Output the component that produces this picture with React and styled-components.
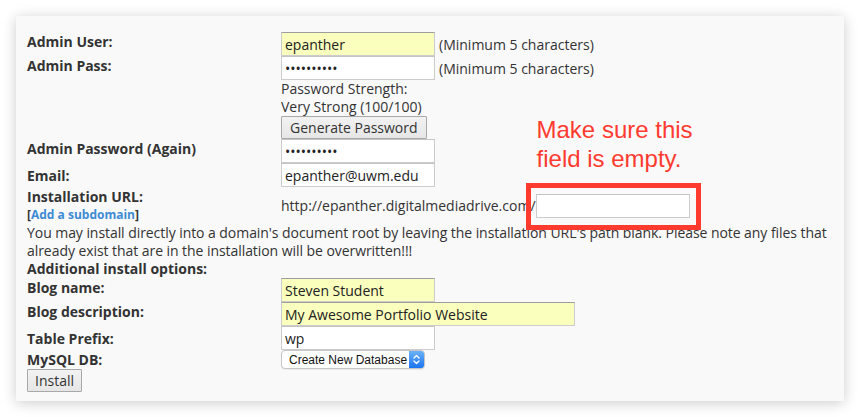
import React from "react";
import styled, { createGlobalStyle } from "styled-components";

const Global = createGlobalStyle`
  html, body { margin: 0; padding: 0; background: #ffffff; }
  body { font-family: "Open Sans", "Liberation Sans", sans-serif; }
`;

const Page = styled.div`
  padding: 16px;
  width: 861px;
  height: 417px;
  box-sizing: border-box;
`;

const Panel = styled.div`
  width: 828px;
  height: 385px;
  box-sizing: border-box;
  padding: 16px 11px 9px 11px;
  background: #f9f9f9;
  box-shadow: 0 2px 13px rgba(0, 0, 0, 0.2);
`;

const Form = styled.div`
  display: grid;
  grid-template-columns: 254px 1fr;
  color: #333333;
  font-family: "Open Sans", "Liberation Sans", sans-serif;
  font-size: 14px;
`;

const Label = styled.div`
  font-weight: 700;
  line-height: 19px;
  align-self: start;
  padding-top: ${(p) => p.$offset || 0}px;
`;

const LabelBlock = styled.div`
  align-self: start;
  display: flex;
  flex-direction: column;
`;

const SubLink = styled.div`
  font-size: 12px;
  font-weight: 700;
  line-height: 18px;
  a {
    color: #3d8bd4;
    text-decoration: none;
  }
`;

const Value = styled.div`
  display: flex;
  align-items: center;
  gap: ${(p) => (p.$gap === undefined ? 4 : p.$gap)}px;
  align-self: ${(p) => (p.$center ? "center" : "start")};
  line-height: 19px;
  white-space: nowrap;
`;

const UrlText = styled.span`
  letter-spacing: 0;
`;

const Stack = styled.div`
  display: flex;
  flex-direction: column;
  align-items: flex-start;
  line-height: 18px;
`;

const InputRow = styled.div`
  display: flex;
  align-items: center;
  gap: 4px;
  line-height: 19px;
`;

const TextInput = styled.input`
  box-sizing: border-box;
  width: ${(p) => p.$w || 154}px;
  height: 24px;
  margin: 0;
  padding: 0 3px;
  border: 1px solid #cccccc;
  border-top-color: ${(p) => (p.$filled ? "#9e9e9e" : "#c4c4c4")};
  background: ${(p) => (p.$filled ? "#faffbd" : "#ffffff")};
  color: #222222;
  font-family: "Open Sans", "Liberation Sans", sans-serif;
  font-size: 14px;
  outline: none;
`;

const Button = styled.button`
  box-sizing: border-box;
  height: 23px;
  margin: 0;
  padding: 0 ${(p) => p.$pad || 8}px;
  border: 1px solid #a8a8a8;
  border-radius: 1px;
  background: linear-gradient(#f2f2f2, #e6e6e6);
  color: #333333;
  font-family: "Open Sans", "Liberation Sans", sans-serif;
  font-size: 14px;
  line-height: 21px;
  cursor: pointer;
`;

const Note = styled.div`
  grid-column: 1 / -1;
  line-height: 18px;
  letter-spacing: -0.06px;
  margin-right: -4px;
`;

const Wide = styled.div`
  grid-column: 1 / -1;
  font-weight: 700;
  line-height: 18px;
`;

const Highlight = styled.span`
  position: relative;
  display: inline-flex;
  &::after {
    content: "";
    position: absolute;
    left: -10px;
    top: -11px;
    right: -11px;
    bottom: -12px;
    border: 5px solid #ff3b30;
    pointer-events: none;
  }
`;

const Callout = styled.div`
  position: absolute;
  left: 1px;
  top: -79px;
  font-family: "Liberation Sans", Arial, sans-serif;
  font-size: 24px;
  line-height: 29px;
  color: #ff3b30;
  white-space: nowrap;
`;

const SelectBox = styled.div`
  display: inline-flex;
  box-sizing: border-box;
  width: 144px;
  height: 19px;
  border: 1px solid #c6c6c6;
  border-radius: 4px;
  background: #ffffff;
  overflow: hidden;
  box-shadow: 0 1px 1px rgba(0, 0, 0, 0.06);
`;

const NativeSelect = styled.select`
  appearance: none;
  -webkit-appearance: none;
  flex: 1;
  min-width: 0;
  height: 100%;
  margin: 0;
  border: 0;
  padding: 0 0 0 7px;
  background: transparent;
  color: #111111;
  font-family: "Liberation Sans", Arial, sans-serif;
  font-size: 12px;
  outline: none;
`;

const Stepper = styled.span`
  width: 15px;
  height: 100%;
  display: flex;
  align-items: center;
  justify-content: center;
  background: linear-gradient(#6ab2fb, #1c74f0);
`;

const Chevrons = () => (
  <svg width="7" height="11" viewBox="0 0 7 11" fill="none">
    <path d="M1 4 L3.5 1.5 L6 4" stroke="#fff" strokeWidth="1.3" strokeLinecap="round" strokeLinejoin="round" />
    <path d="M1 7 L3.5 9.5 L6 7" stroke="#fff" strokeWidth="1.3" strokeLinecap="round" strokeLinejoin="round" />
  </svg>
);

export default function App() {
  return (
    <>
      <Global />
      <Page>
        <Panel>
          <Form>
            <Label>Admin User:</Label>
            <Value>
              <TextInput $filled defaultValue="epanther" />
              <span>(Minimum 5 characters)</span>
            </Value>

            <Label>Admin Pass:</Label>
            <Stack>
              <InputRow>
                <TextInput type="password" defaultValue="aaaaaaaaaa" />
                <span>(Minimum 5 characters)</span>
              </InputRow>
              <span>Password Strength:</span>
              <span>Very Strong (100/100)</span>
              <Button type="button">Generate Password</Button>
            </Stack>

            <Label>Admin Password (Again)</Label>
            <Value>
              <TextInput type="password" defaultValue="aaaaaaaaaa" />
            </Value>

            <Label $offset={3}>Email:</Label>
            <Value>
              <TextInput defaultValue="epanther@uwm.edu" />
            </Value>

            <LabelBlock>
              <Label>Installation URL:</Label>
              <SubLink>
                [<a href="#">Add a subdomain</a>]
              </SubLink>
            </LabelBlock>
            <Value $center $gap={0}>
              <UrlText>http://epanther.digitalmediadrive.com/</UrlText>
              <Highlight>
                <Callout>
                  Make sure this
                  <br />
                  field is empty.
                </Callout>
                <TextInput defaultValue="" />
              </Highlight>
            </Value>

            <Note>
              You may install directly into a domain's document root by leaving the installation URL's path
              blank. Please note any files that already exist that are in the installation will be overwritten!!!
            </Note>

            <Wide>Additional install options:</Wide>

            <Label>Blog name:</Label>
            <Value>
              <TextInput $filled defaultValue="Steven Student" />
            </Value>

            <Label>Blog description:</Label>
            <Value>
              <TextInput $filled $w={294} defaultValue="My Awesome Portfolio Website" />
            </Value>

            <Label $offset={3}>Table Prefix:</Label>
            <Value>
              <TextInput defaultValue="wp" />
            </Value>

            <Label>MySQL DB:</Label>
            <Value>
              <SelectBox>
                <NativeSelect defaultValue="new">
                  <option value="new">Create New Database</option>
                </NativeSelect>
                <Stepper>
                  <Chevrons />
                </Stepper>
              </SelectBox>
            </Value>

            <Label>
              <Button type="button" $pad={7}>Install</Button>
            </Label>
          </Form>
        </Panel>
      </Page>
    </>
  );
}
